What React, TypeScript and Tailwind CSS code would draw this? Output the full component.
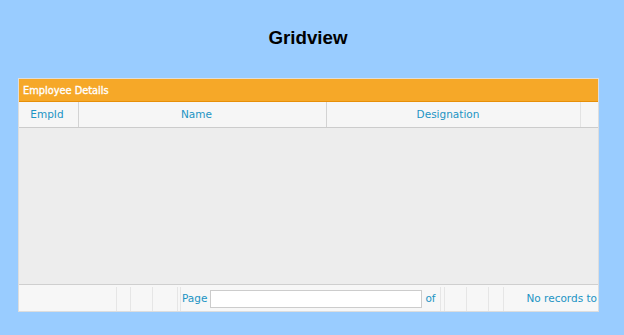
export default function App() {
  const grid = "font-['DejaVu_Sans',sans-serif] text-[10.5px]";
  return (
    <div className="w-[624px] h-[335px] bg-[#99ccff] overflow-hidden">
      <h3 className="pt-[27px] pr-[8px] text-center font-['Liberation_Sans',Arial,sans-serif] text-[18.72px] leading-[22px] font-bold text-black">
        Gridview
      </h3>
      <div className={`mt-[29px] ml-[18px] w-[581px] border border-[#dddddd] bg-[#ededed] ${grid}`}>
        {/* caption */}
        <div className="h-[23px] bg-[#f6a828] border-b border-[#e78f08] flex items-center pl-[4px] pt-[3px] text-white text-[9.8px] [-webkit-text-stroke:0.35px_white]">
          Employee Details
        </div>
        {/* header */}
        <div className="h-[26px] flex bg-[#f6f6f6] border-b border-[#cccccc] text-[#1c94c4]">
          <div className="w-[60px] border-r border-[#d3d3d3] flex items-center justify-center pr-[3px]">EmpId</div>
          <div className="w-[248px] border-r border-[#d3d3d3] flex items-center justify-center pr-[12px]">Name</div>
          <div className="w-[254px] border-r border-[#e3e3e3] flex items-center justify-center pr-[11px]">Designation</div>
          <div className="flex-1" />
        </div>
        {/* body */}
        <div className="h-[156px] bg-[#ededed]" />
        {/* footer */}
        <div className="h-[27px] flex items-stretch bg-[#f7f7f7] border-t border-[#cfcfcf] text-[#1c94c4] pt-[2px]">
          <div className="w-[97px]" />
          <div className="w-[14px] border-l border-[#e6e6e6]" />
          <div className="w-[22px] border-l border-[#e6e6e6]" />
          <div className="w-[25px] border-l border-[#e6e6e6]" />
          <div className="w-[3px] border-l border-[#e6e6e6]" />
          <div className="border-l border-[#e6e6e6] flex items-center pl-[1px]">
            <span>Page</span>
            <input
              readOnly
              className="ml-[3px] w-[212px] h-[18px] bg-white border border-[#cccccc] outline-none"
            />
            <span className="ml-[3px] mr-[4px]">of</span>
          </div>
          <div className="w-[4px] border-l border-[#e6e6e6]" />
          <div className="w-[22px] border-l border-[#e6e6e6]" />
          <div className="w-[22px] border-l border-[#e6e6e6]" />
          <div className="w-[15px] border-l border-[#e6e6e6]" />
          <div className="flex-1 border-l border-[#e6e6e6] flex items-center justify-end overflow-hidden whitespace-nowrap">
            <span className="pr-[1px]">No records to</span>
          </div>
        </div>
      </div>
    </div>
  );
}
